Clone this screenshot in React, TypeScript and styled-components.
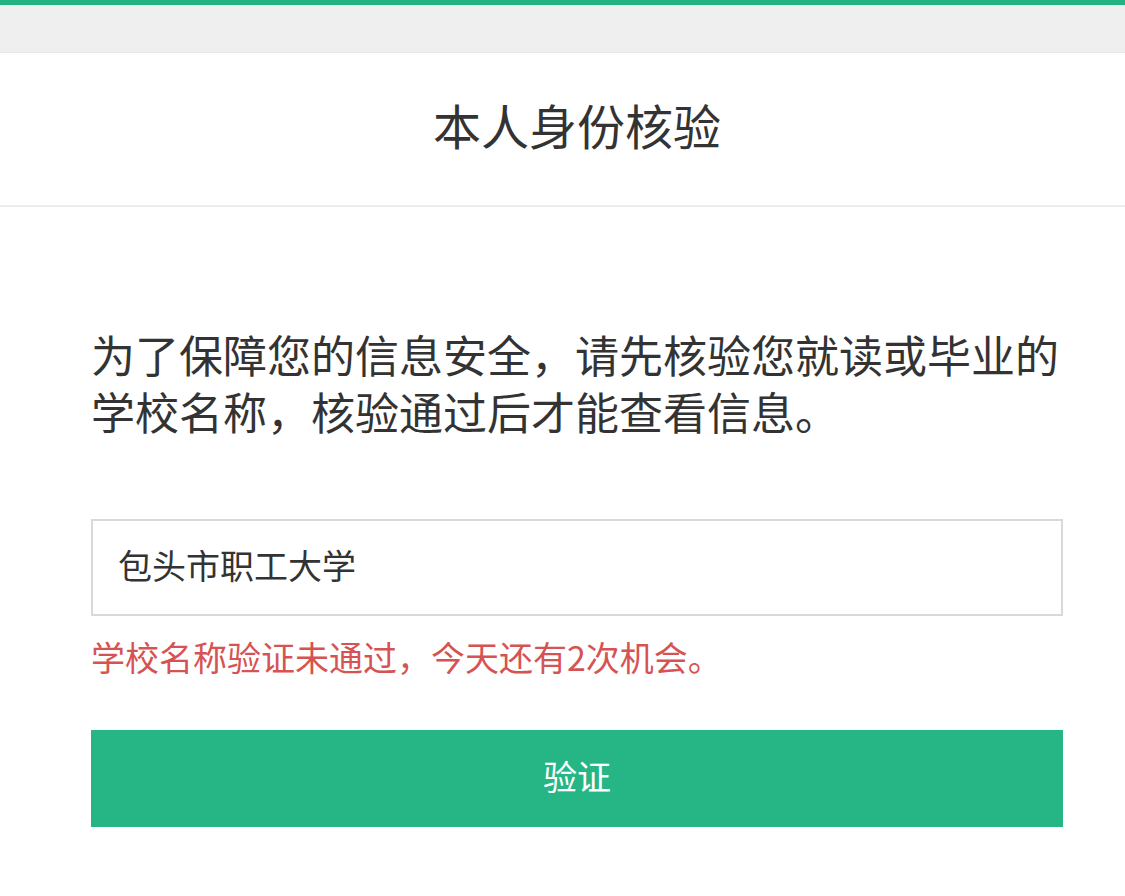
import React, { useState } from "react";
import styled, { createGlobalStyle } from "styled-components";

const GlobalStyle = createGlobalStyle`
  html, body {
    margin: 0;
    padding: 0;
    background: #ffffff;
  }
  body {
    font-family: "Noto Sans CJK SC", "Noto Sans", sans-serif;
    color: #333333;
  }
  * { box-sizing: border-box; }
`;

const Page = styled.div`
  width: 1125px;
  min-height: 896px;
  background: #ffffff;
  display: flex;
  flex-direction: column;
`;

const TopBar = styled.div`
  height: 53px;
  background: #efefef;
  border-top: 5px solid #23b383;
  border-bottom: 1px solid #e6e6e6;
`;

const Header = styled.header`
  height: 154px;
  display: flex;
  align-items: center;
  justify-content: center;
  border-bottom: 2px solid #ececec;
  padding: 0 62px 10px 91px;
`;

const Title = styled.h1`
  margin: 0;
  font-size: 48px;
  font-weight: 400;
  color: #333333;
  line-height: 1;
`;

const Content = styled.main`
  display: flex;
  flex-direction: column;
  padding: 119px 62px 0 91px;
`;

const Notice = styled.p`
  margin: 0;
  font-size: 44px;
  line-height: 57px;
  color: #333333;
`;

const SchoolInput = styled.input`
  margin-top: 79px;
  height: 97px;
  width: 100%;
  border: 2px solid #d9d9d9;
  padding: 0 25px 6px;
  font-family: inherit;
  font-size: 34px;
  color: #333333;
  background: #ffffff;
  outline: none;
`;

const ErrorText = styled.div`
  margin-top: 15px;
  font-size: 34px;
  line-height: 51px;
  color: #d65353;
`;

const VerifyButton = styled.button`
  margin-top: 48px;
  height: 97px;
  width: 100%;
  border: none;
  background: #26b685;
  color: #ffffff;
  font-family: inherit;
  font-size: 34px;
  padding: 0 0 6px;
  cursor: pointer;
`;

export default function App() {
  const [school, setSchool] = useState("包头市职工大学");
  return (
    <Page>
      <GlobalStyle />
      <TopBar />
      <Header>
        <Title>本人身份核验</Title>
      </Header>
      <Content>
        <Notice>
          为了保障您的信息安全，请先核验您就读或毕业的学校名称，核验通过后才能查看信息。
        </Notice>
        <SchoolInput value={school} onChange={(e) => setSchool(e.target.value)} />
        <ErrorText>学校名称验证未通过，今天还有2次机会。</ErrorText>
        <VerifyButton>验证</VerifyButton>
      </Content>
    </Page>
  );
}
